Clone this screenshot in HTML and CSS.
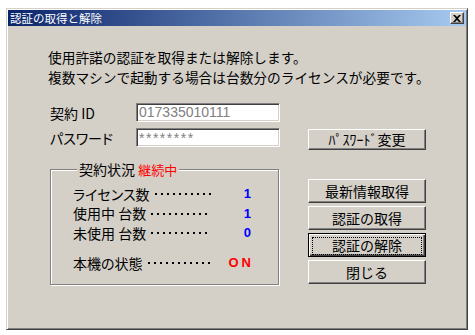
FILE: index.html
```html
<!DOCTYPE html>
<html lang="ja">
<head>
    <meta charset="UTF-8">
    <title>認証の取得と解除</title>
    <link rel="stylesheet" href="styles.css">
</head>
<body>
<div class="window">
    <div class="titlebar">
        <span class="title">認証の取得と解除</span>
        <span class="close">
            <svg width="8" height="7" viewBox="0 0 8 7">
                <path d="M0 0h2l2 2 2-2h2L5 3.5 8 7H6L4 5 2 7H0l3-3.5z" fill="#000"/>
            </svg>
        </span>
    </div>
    <div class="content">
        <p class="intro">使用許諾の認証を取得または解除します。<br>複数マシンで起動する場合は台数分のライセンスが必要です。</p>

        <div class="panel">
            <div class="field field-id">
                <span class="label">契約 ID</span>
                <span class="input">017335010111</span>
            </div>
            <div class="field field-pass">
                <span class="label">パスワード</span>
                <span class="input input-pass">********</span>
            </div>
            <button class="btn btn-pass">ﾊﾟｽﾜｰﾄﾞ変更</button>

            <fieldset class="status">
                <legend>契約状況 <span class="red">継続中</span></legend>
                <div class="row"><span class="name">ライセンス数</span><span class="leader"></span><span class="val blue">1</span></div>
                <div class="row"><span class="name">使用中 台数</span><span class="leader"></span><span class="val blue">1</span></div>
                <div class="row"><span class="name">未使用 台数</span><span class="leader"></span><span class="val blue">0</span></div>
                <div class="row row-state"><span class="name">本機の状態</span><span class="leader"></span><span class="val red on">ON</span></div>
            </fieldset>

            <div class="actions">
                <button class="btn">最新情報取得</button>
                <button class="btn">認証の取得</button>
                <button class="btn btn-default"><span class="focus">認証の解除</span></button>
                <button class="btn">閉じる</button>
            </div>
        </div>
    </div>
</div>
</body>
</html>
```

FILE: styles.css
```css
body {
    margin: 0;
    background: #fff;
    font-family: "Noto Sans CJK JP", sans-serif;
    color: #000;
}

.window {
    box-sizing: border-box;
    width: 462px;
    height: 322px;
    margin: 8px 0 0 6px;
    background: #d4d0c8;
    border: 1px solid;
    border-color: #d4d0c8 #404040 #404040 #d4d0c8;
    box-shadow: inset 1px 1px #fff, inset -1px -1px #808080;
    padding: 1px;
}

.titlebar {
    height: 16px;
    display: flex;
    align-items: center;
    justify-content: space-between;
    padding: 0 2px 0 2px;
    background: linear-gradient(to right, #0a246a, #a6caf0);
}
.title {
    color: #fff;
    font-size: 11.5px;
    line-height: 16px;
}
.close {
    box-sizing: border-box;
    width: 14px;
    height: 12px;
    display: flex;
    align-items: center;
    justify-content: center;
    background: #d4d0c8;
    border: 1px solid;
    border-color: #fff #404040 #404040 #fff;
    box-shadow: inset -1px -1px #808080;
}

.content {
    padding: 21px 0 0 40px;
}
.intro {
    margin: 0;
    font-size: 13.7px;
    line-height: 20px;
}

.panel {
    display: grid;
    grid-template-columns: 230px 118px;
    column-gap: 28px;
    row-gap: 6px;
    margin: 16px 0 0 2px;
}

.field {
    grid-column: 1;
    display: flex;
    align-items: center;
    height: 19px;
}
.field-id { grid-row: 1; }
.field-pass { grid-row: 2; }
.label {
    width: 86px;
    font-size: 14px;
    font-feature-settings: "palt";
}
.input {
    box-sizing: border-box;
    width: 144px;
    height: 19px;
    padding: 0 1px 0 2px;
    background: #fff;
    color: #808080;
    font-family: "Liberation Sans", sans-serif;
    font-size: 14px;
    line-height: 17px;
    border: 1px solid;
    border-color: #808080 #fff #fff #808080;
    box-shadow: inset 1px 1px #404040, inset -1px -1px #d4d0c8;
}
.input-pass {
    letter-spacing: 1.5px;
    line-height: 19px;
}

.btn {
    box-sizing: border-box;
    width: 118px;
    height: 24px;
    padding: 0;
    background: #d4d0c8;
    font-family: "Noto Sans CJK JP", sans-serif;
    font-size: 14px;
    line-height: 20px;
    color: #000;
    border: 1px solid;
    border-color: #fff #404040 #404040 #fff;
    box-shadow: inset -1px -1px #808080;
}
.btn-pass {
    grid-column: 2;
    grid-row: 2;
    align-self: start;
    height: 21px;
    margin-top: 1px;
    line-height: 17px;
}
.btn-default {
    padding: 3px;
    border-color: #000;
    box-shadow: inset 1px 1px #fff, inset -1px -1px #404040, inset -2px -2px #808080;
}
.focus {
    display: block;
    height: 16px;
    line-height: 14px;
    border: 1px dotted #000;
}

.status {
    grid-column: 1;
    grid-row: 3;
    box-sizing: border-box;
    width: 229px;
    min-width: 0;
    margin: 4px 0 0 0;
    padding: 5px 27px 11px 22px;
    border: 1px solid #808080;
    box-shadow: 1px 1px #fff, inset 1px 1px #fff;
}
.status legend {
    margin-left: 4px;
    padding: 0 2px;
    font-size: 14px;
    line-height: 18px;
    background: #d4d0c8;
}
.status legend .red {
    font-size: 13px;
}

.row {
    display: flex;
    align-items: center;
    height: 19.5px;
    font-size: 14px;
    font-feature-settings: "palt";
}
.row-state {
    margin-top: 10.5px;
}
.leader {
    flex: 1;
    height: 2px;
    margin: 1px 1px 0 5px;
    background-image: linear-gradient(to right, #000 2px, transparent 2px);
    background-size: 6px 2px;
    background-repeat: repeat-x;
}
.val {
    width: 39px;
    text-align: right;
    font-family: "Liberation Sans", sans-serif;
    font-weight: bold;
    font-size: 13px;
}
.on {
    letter-spacing: 3px;
    margin-right: -3px;
}

.blue { color: #0000ff; }
.red { color: #ff0000; }

.actions {
    grid-column: 2;
    grid-row: 3;
    margin-top: 23px;
    display: flex;
    flex-direction: column;
    gap: 3px;
}
```
